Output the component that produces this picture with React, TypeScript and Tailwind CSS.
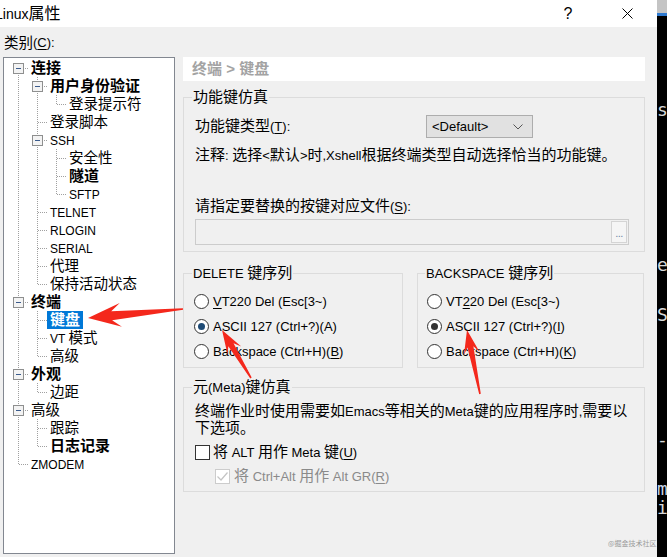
import React from 'react';

const SPLIT = /([\u2E80-\u9FFF\u3000-\u303F\uFF00-\uFFEF]+)/;
const IS_CJK = /[\u2E80-\u9FFF\u3000-\u303F\uFF00-\uFFEF]/;

// Chinese and latin runs get their own size, "&" marks the underlined access key
const Txt: React.FC<{ s: string; cjk?: string; lat?: string }> = ({
  s,
  cjk = 'text-[15px]',
  lat = 'text-[13px]',
}) => {
  const parts: { text: string; u?: boolean }[] = [];
  s.split('&').forEach((seg, i) => {
    if (i === 0) parts.push({ text: seg });
    else {
      parts.push({ text: seg[0], u: true });
      parts.push({ text: seg.slice(1) });
    }
  });
  return (
    <>
      {parts.map((p, i) =>
        p.text.split(SPLIT).filter(Boolean).map((run, j) => (
          <span
            key={`${i}-${j}`}
            className={`${IS_CJK.test(run) ? cjk : lat} ${p.u ? 'underline underline-offset-2' : ''}`}
          >
            {run}
          </span>
        ))
      )}
    </>
  );
};

type CellKind = 'I' | 'T' | 'L' | 'B' | 'F';

const Cell: React.FC<{ k: CellKind }> = ({ k }) => (
  <svg width="19" height="18" className="block shrink-0">
    <g stroke="#a0a0a0" strokeWidth="1" strokeDasharray="1 1">
      {(k === 'I' || k === 'T') && <line x1="9.5" y1="0" x2="9.5" y2="18" />}
      {k === 'L' && <line x1="9.5" y1="0" x2="9.5" y2="10" />}
      {k === 'B' && <line x1="9.5" y1="0" x2="9.5" y2="4" />}
      {(k === 'B' || k === 'F') && <line x1="9.5" y1="16" x2="9.5" y2="18" />}
      {(k === 'T' || k === 'L') && <line x1="10" y1="9.5" x2="19" y2="9.5" />}
      {(k === 'B' || k === 'F') && <line x1="16" y1="9.5" x2="19" y2="9.5" />}
    </g>
    {(k === 'B' || k === 'F') && (
      <>
        <rect x="4.5" y="4.5" width="10" height="10" fill="#f3f3f3" stroke="#8e8f8f" />
        <line x1="7" y1="9.5" x2="12" y2="9.5" stroke="#3b5b8c" />
      </>
    )}
  </svg>
);

type Row = { label: string; cells: CellKind[]; bold?: boolean; selected?: boolean };

const TREE: Row[] = [
  { label: '连接', cells: ['F'], bold: true },
  { label: '用户身份验证', cells: ['I', 'B'], bold: true },
  { label: '登录提示符', cells: ['I', 'I', 'L'] },
  { label: '登录脚本', cells: ['I', 'T'] },
  { label: 'SSH', cells: ['I', 'B'] },
  { label: '安全性', cells: ['I', 'I', 'T'] },
  { label: '隧道', cells: ['I', 'I', 'T'], bold: true },
  { label: 'SFTP', cells: ['I', 'I', 'L'] },
  { label: 'TELNET', cells: ['I', 'T'] },
  { label: 'RLOGIN', cells: ['I', 'T'] },
  { label: 'SERIAL', cells: ['I', 'T'] },
  { label: '代理', cells: ['I', 'T'] },
  { label: '保持活动状态', cells: ['I', 'L'] },
  { label: '终端', cells: ['B'], bold: true },
  { label: '键盘', cells: ['I', 'T'], bold: true, selected: true },
  { label: 'VT 模式', cells: ['I', 'T'] },
  { label: '高级', cells: ['I', 'L'] },
  { label: '外观', cells: ['B'], bold: true },
  { label: '边距', cells: ['I', 'L'] },
  { label: '高级', cells: ['B'] },
  { label: '跟踪', cells: ['I', 'T'] },
  { label: '日志记录', cells: ['I', 'L'], bold: true },
  { label: 'ZMODEM', cells: ['L'] },
];

const Radio: React.FC<{ checked?: boolean; dot?: string }> = ({ checked, dot = 'bg-[#333333]' }) => (
  <span className="w-[15px] h-[15px] rounded-full border border-[#333333] bg-white flex items-center justify-center shrink-0">
    {checked && <span className={`w-[7px] h-[7px] rounded-full ${dot}`} />}
  </span>
);

// swept-back arrow head, like the screenshot tool draws it
function arrow(tx: number, ty: number, px: number, py: number, L: number, W: number) {
  const len = Math.hypot(px - tx, py - ty);
  const dx = (px - tx) / len;
  const dy = (py - ty) / len;
  const nx = -dy;
  const ny = dx;
  const bx = px - dx * L;
  const by = py - dy * L;
  const jx = px - dx * L * 0.72;
  const jy = py - dy * L * 0.72;
  const w1 = W * 0.38;
  const pts = [
    [tx + nx * 0.8, ty + ny * 0.8],
    [jx + nx * w1, jy + ny * w1],
    [bx + nx * W, by + ny * W],
    [px, py],
    [bx - nx * W, by - ny * W],
    [jx - nx * w1, jy - ny * w1],
    [tx - nx * 0.8, ty - ny * 0.8],
  ];
  return pts.map((p) => p.join(',')).join(' ');
}

const App: React.FC = () => {
  return (
    <div className="w-[667px] h-[557px] flex overflow-hidden relative bg-black text-black font-['Liberation_Sans','Noto_Sans_CJK_SC',sans-serif]">
      {/* dialog */}
      <div className="w-[657px] h-full flex flex-col bg-[#f0f0f0] shrink-0">
        <div className="h-[27px] bg-white flex items-center shrink-0">
          <div className="ml-[-5px] leading-[27px] whitespace-nowrap">
            <Txt s="Linux属性" cjk="text-[16px]" lat="text-[14px]" />
          </div>
          <div className="ml-auto w-[46px] text-center text-[16px] font-['Liberation_Sans',sans-serif]">?</div>
          <div className="ml-[13px] mr-[7px] w-[46px] flex justify-center">
            <svg width="11" height="11">
              <path d="M0.5 0.5 L10.5 10.5 M10.5 0.5 L0.5 10.5" stroke="#000" strokeWidth="1" />
            </svg>
          </div>
        </div>

        <div className="flex-1 px-[3px]">
          <div className="h-[30px] flex items-center pl-[1px] pt-[2px] leading-[18px]">
            <Txt s="类别(&C):" cjk="text-[14.5px]" />
          </div>

          <div className="flex gap-[8px]">
            {/* category tree */}
            <div className="w-[172px] h-[497px] border border-[#828790] bg-white pl-[5px] pt-[1px]">
              {TREE.map((r, i) => (
                <div key={i} className="h-[18px] flex items-center">
                  {r.cells.map((c, j) => (
                    <Cell key={j} k={c} />
                  ))}
                  <span
                    className={`h-[18px] leading-[18px] pl-[3px] pr-[3px] whitespace-nowrap ${
                      r.selected ? 'bg-[#0078d7] text-white' : ''
                    }`}
                  >
                    <Txt
                      s={r.label}
                      cjk={r.bold ? 'text-[15px] font-bold' : 'text-[14.5px]'}
                      lat="text-[12px]"
                    />
                  </span>
                </div>
              ))}
            </div>

            {/* page */}
            <div className="w-[462px] flex flex-col">
              <div className="h-[24px] bg-white flex items-center pl-[9px] text-[#a3a3a3] font-bold leading-[18px] whitespace-pre">
                <Txt s="终端 > 键盘" cjk="text-[15px]" lat="text-[15px]" />
              </div>

              <fieldset className="mt-[7px] h-[164px] border border-[#dcdcdc]">
                <legend className="ml-[8px] px-[1px] leading-[18px]">
                  <Txt s="功能键仿真" />
                </legend>
                <div className="pl-[11px] flex flex-col">
                  <div className="mt-[9px] h-[23px] flex items-center">
                    <div className="w-[231px] leading-[18px]">
                      <Txt s="功能键类型(&T):" />
                    </div>
                    <div className="w-[107px] h-[23px] border border-[#adadad] bg-[#e1e1e1] flex items-center pl-[5px] pr-[9px]">
                      <span className="text-[13px]">&lt;Default&gt;</span>
                      <svg width="10" height="6" className="ml-auto">
                        <path d="M0.5 0.5 L5 5 L9.5 0.5" fill="none" stroke="#555" strokeWidth="1" />
                      </svg>
                    </div>
                  </div>
                  <div className="mt-[8px] leading-[18px] whitespace-nowrap">
                    <Txt s="注释: 选择<默认>时,Xshell根据终端类型自动选择恰当的功能键。" />
                  </div>
                  <div className="mt-[32px] leading-[18px]">
                    <Txt s="请指定要替换的按键对应文件(&S):" />
                  </div>
                  <div className="mt-[3px] w-[434px] h-[26px] border border-[#cccccc] flex justify-end p-[1px]">
                    <div className="w-[16px] h-full border border-[#d4d4d4] bg-[#f5f5f5] flex items-end justify-center pb-[3px]">
                      <span className="text-[11px] leading-none text-[#6d87a8] tracking-[-0.5px]">...</span>
                    </div>
                  </div>
                </div>
              </fieldset>

              <div className="mt-[12px] flex gap-[14px]">
                <fieldset className="w-[220px] h-[104px] border border-[#dcdcdc]">
                  <legend className="ml-[8px] px-[1px] leading-[18px]">
                    <Txt s="DELETE 键序列" />
                  </legend>
                  <div className="pl-[10px] pt-[6px]">
                    <div className="h-[25px] flex items-center gap-[4px] leading-[18px]">
                      <Radio />
                      <span><Txt s="&VT220 Del (Esc[3~)" /></span>
                    </div>
                    <div className="h-[25px] flex items-center gap-[4px] leading-[18px]">
                      <Radio checked dot="bg-[#1d4a75]" />
                      <span><Txt s="ASCII 127 (Ctrl+?)(A)" /></span>
                    </div>
                    <div className="h-[25px] flex items-center gap-[4px] leading-[18px]">
                      <Radio />
                      <span><Txt s="Backspace (Ctrl+H)(&B)" /></span>
                    </div>
                  </div>
                </fieldset>
                <fieldset className="w-[227px] h-[104px] border border-[#dcdcdc]">
                  <legend className="ml-[7px] px-[1px] leading-[18px]">
                    <Txt s="BACKSPACE 键序列" />
                  </legend>
                  <div className="pl-[9px] pt-[6px]">
                    <div className="h-[25px] flex items-center gap-[4px] leading-[18px]">
                      <Radio />
                      <span><Txt s="VT&220 Del (Esc[3~)" /></span>
                    </div>
                    <div className="h-[25px] flex items-center gap-[4px] leading-[18px]">
                      <Radio checked />
                      <span><Txt s="ASCII 127 (Ctrl+?)(&I)" /></span>
                    </div>
                    <div className="h-[25px] flex items-center gap-[4px] leading-[18px]">
                      <Radio />
                      <span><Txt s="Backspace (Ctrl+H)(&K)" /></span>
                    </div>
                  </div>
                </fieldset>
              </div>

              <fieldset className="mt-[10px] h-[114px] border border-[#dcdcdc]">
                <legend className="ml-[8px] px-[1px] leading-[18px]">
                  <Txt s="元(Meta)键仿真" />
                </legend>
                <div className="pl-[11px] flex flex-col">
                  <div className="mt-[6px] leading-[16px] whitespace-nowrap">
                    <Txt s="终端作业时使用需要如Emacs等相关的Meta键的应用程序时,需要以" />
                    <br />
                    <Txt s="下选项。" />
                  </div>
                  <div className="mt-[6px] h-[20px] flex items-center gap-[3px] leading-[18px]">
                    <span className="w-[15px] h-[15px] border border-[#333333] bg-white shrink-0" />
                    <span><Txt s="将 ALT 用作 Meta 键(&U)" /></span>
                  </div>
                  <div className="mt-[4px] h-[20px] pl-[20px] flex items-center gap-[4px] leading-[18px] text-[#8a8a8a]">
                    <span className="w-[15px] h-[15px] border border-[#cccccc] bg-white shrink-0 flex items-center justify-center">
                      <svg width="11" height="9">
                        <path d="M0.5 4.5 L4 8 L10.5 0.5" fill="none" stroke="#c4c4c4" strokeWidth="1.2" />
                      </svg>
                    </span>
                    <span><Txt s="将 Ctrl+Alt 用作 Alt GR(&R)" /></span>
                  </div>
                </div>
              </fieldset>
            </div>
          </div>
        </div>
      </div>

      {/* terminal window peeking out on the right */}
      <div className="w-[10px] h-full flex flex-col shrink-0 overflow-hidden font-['DejaVu_Sans_Mono',monospace] text-[18px] text-[#d8d8d8]">
        <div className="h-[13px] bg-[#c4c4c4] shrink-0" />
        <div className="h-[3px] bg-[#2f7ad0] shrink-0" />
        <div className="mt-[84px] h-[20px] leading-[20px]">s</div>
        <div className="mt-[135px] h-[20px] leading-[20px]">e</div>
        <div className="mt-[30px] h-[20px] leading-[20px]">S</div>
        <div className="mt-[105px] h-[20px] leading-[20px]">-</div>
        <div className="mt-[29px] h-[19px] leading-[19px] text-[#c9d4e8]">m</div>
        <div className="h-[19px] leading-[19px]">i</div>
      </div>

      <div className="absolute left-[608px] top-[538px] text-[7px] leading-[10px] text-[#9a9a9a] font-['Noto_Sans_CJK_SC',sans-serif]">
        @掘金技术社区
      </div>

      <svg className="absolute inset-0 pointer-events-none" width="667" height="557">
        <polygon points={arrow(183, 309, 88, 318, 33, 12)} fill="#f4281c" />
        <polygon points={arrow(251, 378, 222, 330, 24, 8)} fill="#f4281c" />
        <polygon points={arrow(480, 394, 467, 330, 24, 8)} fill="#f4281c" />
      </svg>
    </div>
  );
};

export default App;
